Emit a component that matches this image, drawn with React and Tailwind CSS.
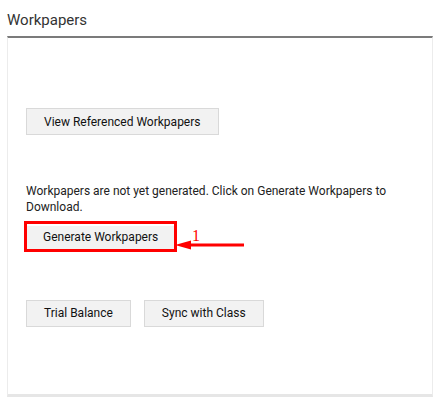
import React from 'react';

const Btn = ({ children, className = '' }) => (
  <button
    className={`h-[27px] px-[17px] bg-[#f2f2f2] border border-[#d9d9d9] text-[12px] font-normal text-[#111] leading-none ${className}`}
  >
    {children}
  </button>
);

const App = () => {
  return (
    <div
      className="w-[445px] h-[407px] bg-white overflow-hidden"
      style={{ fontFamily: 'Roboto, "Liberation Sans", sans-serif' }}
    >
      {/* Header */}
      <div className="h-[36px] pl-[7px] pt-[11px] text-[15px] leading-[18px] text-[#333]">Workpapers</div>

      {/* Panel */}
      <div className="mx-[7px] w-[426px] h-[361px] border-t-2 border-t-[#7b7b7b] border-x border-x-[#ececec] border-b-[3px] border-b-[#e6e6e6] pl-[18px] pt-[70px] flex flex-col items-start">
        <Btn>View Referenced Workpapers</Btn>

        <p className="mt-[48px] text-[12px] leading-[16px] text-[#222] w-[390px]">
          Workpapers are not yet generated. Click on Generate Workpapers to Download.
        </p>

        <div className="relative mt-[6px] -ml-[2px]">
          <div className="border-[3px] border-[#ff0000]">
            <button className="h-[23px] px-[16px] bg-[#f2f2f2] text-[12px] font-normal text-[#111] leading-none">
              Generate Workpapers
            </button>
          </div>
          {/* annotation arrow */}
          <svg
            className="absolute left-[151px] top-[19px]"
            width="72"
            height="12"
            viewBox="0 0 72 12"
          >
            <polygon points="0,5 16,0.5 16,9.5" fill="#ff0000" />
            <rect x="15" y="3.5" width="54" height="3" fill="#ff0000" />
          </svg>
          <span
            className="absolute left-[168px] top-[7px] text-[16px] leading-none text-[#ff0000]"
            style={{ fontFamily: '"Liberation Serif", serif' }}
          >
            1
          </span>
        </div>

        <div className="mt-[48px] flex gap-[13px]">
          <Btn>Trial Balance</Btn>
          <Btn>Sync with Class</Btn>
        </div>
      </div>
    </div>
  );
};

export default App;
